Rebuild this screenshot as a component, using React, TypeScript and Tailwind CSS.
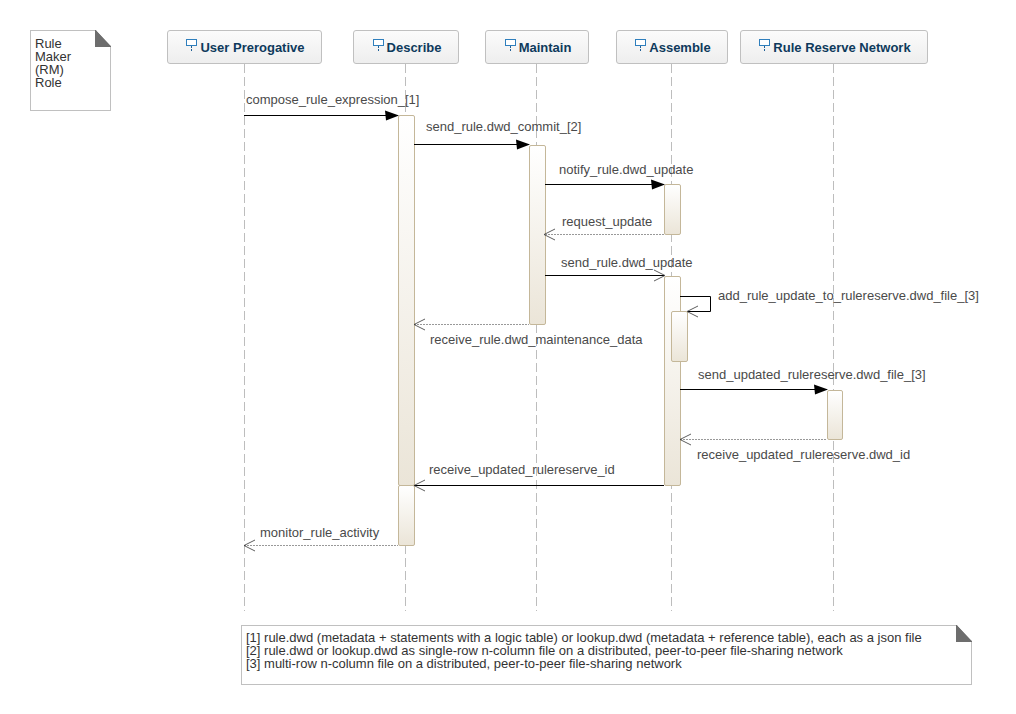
const font = "font-['Liberation_Sans',Arial,sans-serif]";

function Header({ className, label }: { className: string; label: string }) {
  return (
    <div
      className={`flex h-[34px] shrink-0 items-center justify-center gap-[2px] rounded-[3px] border border-[#c0c0c0] bg-gradient-to-b from-[#fbfbfb] to-[#eeeeee] pl-[2px] pt-[1px] text-[13px] font-bold text-[#0e3a5c] ${className}`}
    >
      <svg width={12} height={14} viewBox="0 0 12 14" className="mb-[3px]">
        <rect x={0.5} y={0.5} width={10} height={6} fill="#fff" stroke="#2f7fbd" />
        <path d="M5.5 7v6" stroke="#1f5f96" strokeDasharray="2 1" />
      </svg>
      <span>{label}</span>
    </div>
  );
}

function Bar({ className }: { className: string }) {
  return (
    <div
      className={`absolute rounded-[2px] border border-[#c4b799] bg-gradient-to-b from-white to-[#ebe5d8] ${className}`}
    />
  );
}

function Label({ className, text }: { className: string; text: string }) {
  return (
    <div className={`absolute h-[14px] whitespace-nowrap text-[13px] leading-[14px] text-[#4a4a4a] ${className}`}>
      {text}
    </div>
  );
}

function Note({ className, lines, textClass }: { className: string; lines: string[]; textClass: string }) {
  return (
    <div
      className={`relative shrink-0 border border-[#c0c0c0] bg-white text-[13px] leading-[13px] text-[#333333] ${className}`}
    >
      <div className={textClass}>
        {lines.map((l) => (
          <div key={l} className="whitespace-nowrap">
            {l}
          </div>
        ))}
      </div>
      <svg width={16} height={17} viewBox="0 0 16 17" className="absolute right-[-1px] top-[-1px]">
        <path d="M0 0H1L16 16V17H0Z" fill="#6d6d6d" />
        <path d="M1 0H16V16Z" fill="#fff" />
      </svg>
    </div>
  );
}

function Head({ x, y, dir, filled }: { x: number; y: number; dir: 1 | -1; filled?: boolean }) {
  // x,y = tip of the arrow, dir = direction it points in
  if (filled) {
    return <polygon points={`${x},${y} ${x - dir * 14},${y - 5} ${x - dir * 13},${y + 5}`} fill="#000" />;
  }
  return (
    <polyline
      points={`${x - dir * 11},${y - 5.5} ${x},${y} ${x - dir * 11},${y + 5.5}`}
      fill="none"
      stroke="#333"
      strokeWidth={0.8}
    />
  );
}

export default function App() {
  const lifelines = [244.5, 405.5, 536.5, 671.5, 833.5];

  return (
    <div className={`relative flex h-[714px] w-[1016px] flex-col overflow-hidden bg-white ${font}`}>
      {/* lifelines sit under everything else */}
      <svg width={1016} height={714} className="absolute left-0 top-0">
        {lifelines.map((x) => (
          <line key={x} x1={x} y1={64} x2={x} y2={611} stroke="#bdbdbd" strokeDasharray="9 4" />
        ))}
      </svg>

      <div className="relative flex items-start pl-[30px] pt-[30px]">
        <Note
          className="h-[81px] w-[81px]"
          textClass="pl-[4px] pt-[6px]"
          lines={["Rule", "Maker", "(RM)", "Role"]}
        />
        <Header className="ml-[56px] w-[155px]" label="User Prerogative" />
        <Header className="ml-[31px] w-[106px]" label="Describe" />
        <Header className="ml-[26px] w-[104px]" label="Maintain" />
        <Header className="ml-[27px] w-[112px]" label="Assemble" />
        <Header className="ml-[12px] w-[188px]" label="Rule Reserve Network" />
      </div>

      <Bar className="left-[398px] top-[115px] h-[371px] w-[17px]" />
      <Bar className="left-[398px] top-[485px] h-[61px] w-[17px]" />
      <Bar className="left-[529px] top-[145px] h-[180px] w-[17px]" />
      <Bar className="left-[664px] top-[184px] h-[51px] w-[17px]" />
      <Bar className="left-[664px] top-[276px] h-[210px] w-[17px]" />
      <Bar className="left-[671px] top-[311px] h-[51px] w-[17px]" />
      <Bar className="left-[827px] top-[390px] h-[50px] w-[16px]" />

      <Label className="left-[246px] top-[93px]" text="compose_rule_expression_[1]" />
      <Label className="left-[426px] top-[120px]" text="send_rule.dwd_commit_[2]" />
      <Label className="left-[559px] top-[163px]" text="notify_rule.dwd_update" />
      <Label className="left-[562px] top-[215px]" text="request_update" />
      <Label className="left-[561px] top-[256px]" text="send_rule.dwd_update" />
      <Label className="left-[718px] top-[289px]" text="add_rule_update_to_rulereserve.dwd_file_[3]" />
      <Label className="left-[430px] top-[333px]" text="receive_rule.dwd_maintenance_data" />
      <Label className="left-[698px] top-[368px]" text="send_updated_rulereserve.dwd_file_[3]" />
      <Label className="left-[697px] top-[448px]" text="receive_updated_rulereserve.dwd_id" />
      <Label className="left-[429px] top-[463px]" text="receive_updated_rulereserve_id" />
      <Label className="left-[260px] top-[526px]" text="monitor_rule_activity" />

      {/* messages */}
      <svg width={1016} height={714} className="absolute left-0 top-0">
        <path d="M244 115.5H398M414 144.5H529M545 184.5H664M545 275.5H664M680 389.5H827M414 485.5H664" stroke="#000" fill="none" />
        <path d="M680 296.5H710.5V311.5H688" stroke="#000" fill="none" />
        <path d="M545 234.5H664M414 324.5H529M680 439.5H827M244 545.5H398" stroke="#999" strokeDasharray="2 1" fill="none" />
        <Head x={399} y={115.5} dir={1} filled />
        <Head x={530} y={144.5} dir={1} filled />
        <Head x={665} y={184.5} dir={1} filled />
        <Head x={828} y={389.5} dir={1} filled />
        <Head x={665} y={275.5} dir={1} />
        <Head x={687} y={311.5} dir={-1} />
        <Head x={544} y={234.5} dir={-1} />
        <Head x={414} y={324.5} dir={-1} />
        <Head x={680} y={439.5} dir={-1} />
        <Head x={414} y={485.5} dir={-1} />
        <Head x={244} y={545.5} dir={-1} />
      </svg>

      <Note
        className="ml-[241px] mt-[514px] h-[60px] w-[731px]"
        textClass="pl-[4px] pt-[5px]"
        lines={[
          "[1] rule.dwd (metadata + statements with a logic table) or lookup.dwd (metadata + reference table), each as a json file",
          "[2] rule.dwd or lookup.dwd as single-row n-column file on a distributed, peer-to-peer file-sharing network",
          "[3] multi-row n-column file on a distributed, peer-to-peer file-sharing network",
        ]}
      />
    </div>
  );
}
